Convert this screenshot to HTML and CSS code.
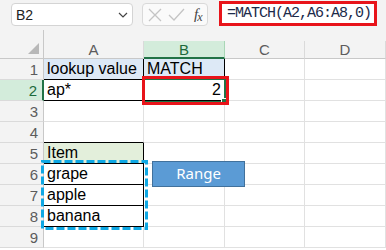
FILE: index.html
```html
<html lang="en">

<head>
    <meta charset="UTF-8">
    <title>MATCH</title>
    <link rel="stylesheet" href="styles.css">
</head>

<body>
    <div id="app">
        <div class="toolbar">
            <div class="namebox">
                <span>B2</span>
                <svg class="chevron" width="10" height="6" viewBox="0 0 10 6">
                    <polyline points="1,1 5,5 9,1" fill="none" stroke="#444" stroke-width="1.2"/>
                </svg>
            </div>
            <div class="fxbox">
                <svg width="14" height="14" viewBox="0 0 14 14">
                    <path d="M1,1 L13,13 M13,1 L1,13" stroke="#c4c4c4" stroke-width="1.3" fill="none"/>
                </svg>
                <svg width="17" height="13" viewBox="0 0 17 13">
                    <polyline points="1,7 6,12 16,1" stroke="#c4c4c4" stroke-width="1.3" fill="none"/>
                </svg>
                <span class="fx"><i>f</i><i class="x">x</i></span>
            </div>
            <div class="formula">=MATCH(A2,A6:A8,0)</div>
        </div>

        <div class="sheet">
            <div class="grid">
                <!-- spacer row -->
                <div class="corner"><span class="tri"></span></div>
                <div class="gap"></div>
                <div class="gap"></div>
                <div class="gap"></div>
                <div class="gap"></div>
                <!-- column headers -->
                <div class="colhead">A</div>
                <div class="colhead sel">B</div>
                <div class="colhead">C</div>
                <div class="colhead">D</div>
                <!-- row 1 -->
                <div class="rowhead">1</div>
                <div class="cell blue bR bB">lookup value</div>
                <div class="cell blue bR bB">MATCH</div>
                <div class="cell"></div>
                <div class="cell"></div>
                <!-- row 2 -->
                <div class="rowhead sel">2</div>
                <div class="cell bR bB">ap*</div>
                <div class="cell bR bB num">2</div>
                <div class="cell"></div>
                <div class="cell"></div>
                <!-- row 3 -->
                <div class="rowhead">3</div>
                <div class="cell"></div>
                <div class="cell"></div>
                <div class="cell"></div>
                <div class="cell"></div>
                <!-- row 4 -->
                <div class="rowhead">4</div>
                <div class="cell bB"></div>
                <div class="cell"></div>
                <div class="cell"></div>
                <div class="cell"></div>
                <!-- row 5 -->
                <div class="rowhead">5</div>
                <div class="cell green bR bB">Item</div>
                <div class="cell"></div>
                <div class="cell"></div>
                <div class="cell"></div>
                <!-- row 6 -->
                <div class="rowhead">6</div>
                <div class="cell bR bB">grape</div>
                <div class="cell"></div>
                <div class="cell"></div>
                <div class="cell"></div>
                <!-- row 7 -->
                <div class="rowhead">7</div>
                <div class="cell bR bB">apple</div>
                <div class="cell"></div>
                <div class="cell"></div>
                <div class="cell"></div>
                <!-- row 8 -->
                <div class="rowhead">8</div>
                <div class="cell bR bB">banana</div>
                <div class="cell"></div>
                <div class="cell"></div>
                <div class="cell"></div>
                <!-- row 9 -->
                <div class="rowhead">9</div>
                <div class="cell"></div>
                <div class="cell"></div>
                <div class="cell"></div>
                <div class="cell"></div>
            </div>

            <!-- overlays -->
            <div class="selbox"><span class="handle"></span></div>
            <div class="redbox"></div>
            <svg class="ants" width="107" height="70" viewBox="0 0 107 70">
                <rect x="1.5" y="1.5" width="104" height="67" fill="none" stroke="#0fa8e4" stroke-width="3" stroke-dasharray="8 3"/>
            </svg>
            <div class="range">Range</div>
        </div>
    </div>
</body>

</html>
```

FILE: styles.css
```css
body {
    margin: 0px;
    padding: 0px;
}

#app {
    width: 386px;
    height: 250px;
    overflow: hidden;
    background: #fff;
    font-family: "Liberation Sans", Arial, sans-serif;
}

.toolbar {
    display: flex;
    align-items: flex-start;
    height: 30px;
    background: #f3f3f3;
}

.namebox {
    display: flex;
    align-items: center;
    justify-content: space-between;
    box-sizing: border-box;
    margin: 3px 0 0 11px;
    width: 122px;
    height: 23px;
    padding: 0 4px 0 4px;
    background: #fff;
    border: 1px solid #d4d4d4;
    border-radius: 4px;
    font-size: 14px;
    color: #222;
}

.fxbox {
    display: flex;
    align-items: center;
    gap: 6px;
    box-sizing: border-box;
    margin: 3px 0 0 9px;
    width: 66px;
    height: 23px;
    padding: 0 0 0 5px;
    background: #fafafa;
    border: 1px solid #d9d9d9;
    border-radius: 4px;
}

.fx {
    font-family: "Liberation Serif", serif;
    font-size: 15px;
    color: #444;
    margin-left: 3px;
}

.fx .x {
    font-size: 12px;
    position: relative;
    top: 2px;
    left: -1px;
}

.formula {
    box-sizing: border-box;
    margin: 1px 0 0 11px;
    width: 158px;
    height: 25px;
    padding: 0 0 0 5px;
    border: 3px solid #e8141a;
    background: #fff;
    font-family: "Liberation Mono", monospace;
    font-size: 15px;
    letter-spacing: -1px;
    line-height: 19px;
    color: #1b2a4a;
    white-space: nowrap;
}

.sheet {
    position: relative;
}

.grid {
    display: grid;
    grid-template-columns: 44px 100px 81px 80px 81px;
    grid-template-rows: 11px 18px repeat(9, 21px);
}

.corner {
    grid-row: span 2;
    position: relative;
    background: #f3f3f3;
    border-right: 1px solid #c8c8c8;
    border-bottom: 1px solid #c8c8c8;
}

.tri {
    position: absolute;
    right: 4px;
    bottom: 4px;
    width: 0;
    height: 0;
    border-left: 11px solid transparent;
    border-bottom: 11px solid #b8b8b8;
}

.gap {
    background: #f3f3f3;
}

.colhead {
    display: flex;
    align-items: center;
    justify-content: center;
    background: #f3f3f3;
    border-right: 1px solid #dadada;
    border-bottom: 1px solid #c8c8c8;
    font-size: 15px;
    color: #5c5c5c;
}

.colhead.sel {
    background: #d3ecdb;
    border-bottom: 2px solid #217346;
    border-right: 1px solid #a9d6b6;
    color: #1d6a3c;
}

.rowhead {
    display: flex;
    align-items: flex-end;
    justify-content: flex-end;
    padding: 0 5px 1px 0;
    background: #f3f3f3;
    border-right: 1px solid #c8c8c8;
    border-bottom: 1px solid #dadada;
    font-size: 15px;
    color: #5c5c5c;
}

.rowhead.sel {
    background: #d3ecdb;
    border-right: 2px solid #217346;
    color: #1d6a3c;
}

.cell {
    display: flex;
    align-items: flex-end;
    padding: 0 3px 1px 3px;
    border-right: 1px solid #e1e1e1;
    border-bottom: 1px solid #e1e1e1;
    font-size: 16px;
    line-height: 18px;
    color: #000;
    white-space: nowrap;
}

.cell.bR {
    border-right-color: #000;
}

.cell.bB {
    border-bottom-color: #000;
}

.cell.blue {
    background: #dde9f6;
}

.cell.green {
    background: #e3efdb;
}

.cell.num {
    justify-content: flex-end;
}

/* things drawn over the grid */
.selbox {
    position: absolute;
    left: 143px;
    top: 48px;
    width: 79px;
    height: 21px;
    border: 2px solid #217346;
}

.handle {
    position: absolute;
    right: -4px;
    bottom: -4px;
    width: 5px;
    height: 5px;
    background: #217346;
    border: 1px solid #fff;
}

.redbox {
    position: absolute;
    left: 142px;
    top: 46px;
    width: 81px;
    height: 23px;
    border: 3px solid #e8141a;
}

.ants {
    position: absolute;
    left: 41px;
    top: 130px;
}

.range {
    position: absolute;
    left: 152px;
    top: 131px;
    box-sizing: border-box;
    width: 93px;
    height: 26px;
    background: #5b9bd5;
    border: 1px solid #41719c;
    color: #fff;
    font-family: "Noto Sans", sans-serif;
    font-size: 15px;
    line-height: 23px;
    text-align: center;
}
```
